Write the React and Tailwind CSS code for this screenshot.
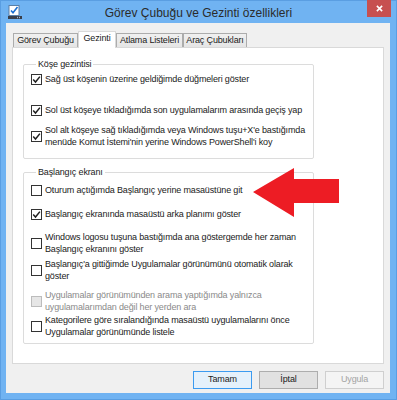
import React from 'react';

const font = { fontFamily: '"Liberation Sans", Arial, sans-serif' };

const cornerRows = [
  { lines: ['Sağ üst köşenin üzerine geldiğimde düğmeleri göster'], checked: true, gap: 'mt-[3px]' },
  { lines: ['Sol üst köşeye tıkladığımda son uygulamalarım arasında geçiş yap'], checked: true, gap: 'mt-[19px]' },
  {
    lines: [
      'Sol alt köşeye sağ tıkladığımda veya Windows tuşu+X\'e bastığımda',
      'menüde Komut İstemi\'nin yerine Windows PowerShell\'i koy'
    ],
    checked: true,
    gap: 'mt-[8px]'
  }
];

const startRows = [
  { lines: ['Oturum açtığımda Başlangıç yerine masaüstüne git'], gap: 'mt-[6px]' },
  { lines: ['Başlangıç ekranında masaüstü arka planımı göster'], checked: true, gap: 'mt-[12px]' },
  {
    lines: ['Windows logosu tuşuna bastığımda ana göstergemde her zaman', 'Başlangıç ekranını göster'],
    gap: 'mt-[11px]'
  },
  {
    lines: ['Başlangıç\'a gittiğimde Uygulamalar görünümünü otomatik olarak', 'göster'],
    gap: 'mt-[3px]'
  },
  {
    lines: ['Uygulamalar görünümünden arama yaptığımda yalnızca', 'uygulamalarımdan değil her yerden ara'],
    disabled: true,
    gap: 'mt-[7px]'
  },
  {
    lines: ['Kategorilere göre sıralandığında masaüstü uygulamalarını önce', 'Uygulamalar görünümünde listele'],
    gap: 'mt-[1px]'
  }
];

function CheckBox({ checked, disabled }) {
  return (
    <span
      className={`flex h-[11px] w-[11px] shrink-0 items-center justify-center border ${
        disabled ? 'border-[#BCBCBC] bg-[#E6E6E6]' : 'border-[#333333] bg-white'
      }`}
    >
      {checked && (
        <svg viewBox="0 0 9 9" className="h-[9px] w-[9px]">
          <path d="M1.2 4.6 L3.5 7 L7.9 1.6" stroke="#1f1f1f" strokeWidth="1.5" fill="none" />
        </svg>
      )}
    </span>
  );
}

function Row({ lines, checked, disabled, gap }) {
  return (
    <div className={`flex items-center gap-[3px] ${gap}`}>
      <CheckBox checked={checked} disabled={disabled} />
      <div className={`leading-[12px] ${disabled ? 'text-[#8A8A8A]' : 'text-[#1a1a1a]'}`}>
        {lines.map((l) => (
          <div key={l} className="whitespace-nowrap">
            {l}
          </div>
        ))}
      </div>
    </div>
  );
}

function Group({ title, rows, className }) {
  return (
    <fieldset className={`w-[291px] rounded-[2px] border border-[#DCDCDC] pl-[7px] ${className}`}>
      <legend className="ml-[5px] px-[2px] leading-[12px] text-[#1a1a1a]">{title}</legend>
      {rows.map((r, i) => (
        <Row key={i} {...r} />
      ))}
    </fieldset>
  );
}

function Tab({ label, active, className }) {
  if (active)
    return (
      <div
        className={`relative z-10 -mb-px flex h-[17px] items-center justify-center border border-b-0 border-[#D9D9D9] bg-white pb-[3px] ${className}`}
      >
        {label}
      </div>
    );
  return (
    <div
      className={`flex h-[14px] items-center justify-center border border-b-0 border-[#ACACAC] bg-gradient-to-b from-[#F0F0F0] to-[#E5E5E5] pt-[1px] ${className}`}
    >
      {label}
    </div>
  );
}

function Button({ children, primary, disabled }) {
  return (
    <div
      className={`flex h-[18px] w-[59px] items-center justify-center border ${
        primary
          ? 'border-[#3C9BF0] bg-[#E5F1FB] text-[#1a1a1a]'
          : disabled
            ? 'border-[#CFCFCF] bg-[#F4F4F4] text-[#A3A3A3]'
            : 'border-[#ADADAD] bg-[#E1E1E1] text-[#1a1a1a]'
      }`}
    >
      {children}
    </div>
  );
}

export default function App() {
  return (
    <div
      style={font}
      className="relative flex h-[400px] w-[397px] flex-col border border-[#5A9EE2] bg-[#70B3F2] text-[9px] tracking-[-0.15px]"
    >
      <div className="grid h-[22px] grid-cols-[1fr_auto_1fr] items-start">
        <div className="pl-[7px] pt-[4px]">
          <svg viewBox="0 0 14 14" className="h-[14px] w-[14px]">
            <rect x="1" y="0.5" width="10" height="10" fill="#fff" stroke="#5a7fa6" />
            <path d="M3 5.5 L5 7.8 L9.5 2" stroke="#1b6fd1" strokeWidth="1.6" fill="none" />
            <rect x="0" y="11" width="14" height="3" fill="#3a3f4a" />
            <rect x="9" y="11.8" width="1" height="1.4" fill="#9fb3c8" />
            <rect x="11" y="11.8" width="1" height="1.4" fill="#9fb3c8" />
          </svg>
        </div>
        <div className="pt-[5px] text-[12px] leading-[14px] tracking-normal text-[#2b2b2b]">
          Görev Çubuğu ve Gezinti özellikleri
        </div>
        <div className="-mt-px flex justify-end pr-[5px]">
          <div className="flex h-[17px] w-[24px] items-center justify-center bg-[#C75050]">
            <svg viewBox="0 0 8 8" className="h-[7px] w-[7px]">
              <path d="M1 1 L7 7 M7 1 L1 7" stroke="#fff" strokeWidth="1.8" />
            </svg>
          </div>
        </div>
      </div>

      <div className="ml-[5px] flex h-[370px] w-[384px] flex-col bg-[#F0F0F0] px-[6px] pt-[8px] text-[#1a1a1a]">
        <div className="flex h-[16px] items-end pl-[1px]">
          <Tab label="Görev Çubuğu" className="w-[65px]" />
          <Tab label="Gezinti" active className="w-[38px]" />
          <Tab label="Atlama Listeleri" className="w-[67px]" />
          <Tab label="Araç Çubukları" className="w-[64px]" />
        </div>
        <div className="flex h-[317px] flex-col border border-[#D9D9D9] bg-white pl-[10px] pt-[10px]">
          <Group title="Köşe gezintisi" rows={cornerRows} className="pb-[10px]" />
          <Group title="Başlangıç ekranı" rows={startRows} className="mt-[7px] pb-[5px]" />
        </div>
        <div className="mt-[7px] flex justify-end gap-[7px]">
          <Button primary>Tamam</Button>
          <Button>İptal</Button>
          <Button disabled>Uygula</Button>
        </div>
      </div>

      <svg viewBox="0 0 90 55" className="absolute left-[250px] top-[164px] h-[55px] w-[90px]">
        <polygon points="2,27 43,3 43,14 88,14 88,38 43,38 43,52" fill="#ED1C24" />
      </svg>
    </div>
  );
}
